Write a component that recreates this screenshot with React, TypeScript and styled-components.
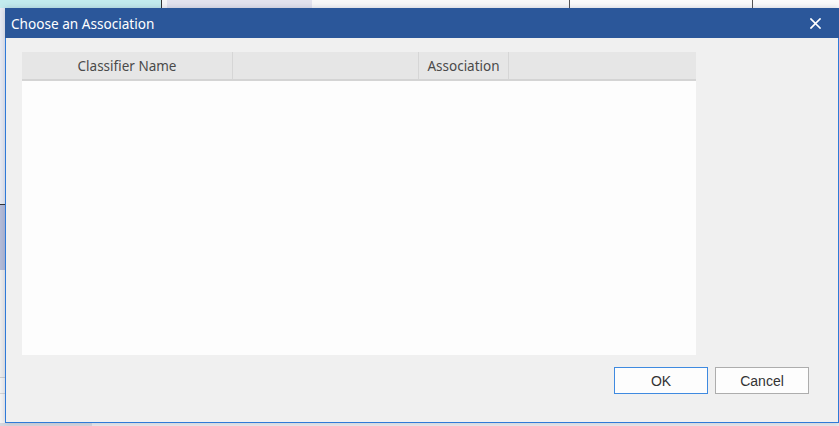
import React from 'react';
import styled, { createGlobalStyle } from 'styled-components';

const GlobalStyle = createGlobalStyle`
  html, body
  {
    margin: 0;
    padding: 0;
    background: #f4f4f6;
    overflow: hidden;
  }
`;

// window behind the modal: only its edges show around the dialog
const Desktop = styled.div`
  position: relative;
  width: 839px;
  height: 426px;
  display: flex;
  flex-direction: column;
  background: #f4f4f6;
`;

const TopStrip = styled.div`
  display: flex;
  height: 8px;
  flex-shrink: 0;
`;

const Pane = styled.div<{ $w?: number; $bg: string; $edge?: string }>`
  ${p => (p.$w ? `width: ${p.$w}px;` : 'flex: 1;')}
  background: ${p => p.$bg};
  border-right: ${p => (p.$edge ? `1px solid ${p.$edge}` : 'none')};
  flex-shrink: 0;
`;

const Middle = styled.div`
  flex: 1;
  display: flex;
`;

const LeftRail = styled.div`
  width: 5px;
  display: flex;
  flex-direction: column;
`;

const RailPart = styled.div<{ $h?: number; $bg: string; $line?: string }>`
  ${p => (p.$h ? `height: ${p.$h}px;` : 'flex: 1;')}
  background: ${p => p.$bg};
  border-top: ${p => (p.$line ? `1px solid ${p.$line}` : 'none')};
  flex-shrink: 0;
`;

const BottomShade = styled.div`
  height: 3px;
  display: flex;
`;

const Dialog = styled.div`
  position: absolute;
  left: 5px;
  top: 8px;
  width: 834px;
  height: 415px;
  box-sizing: border-box;
  border: 1px solid #2f7ad8;
  border-top: none;
  background: #f0f0f0;
  display: flex;
  flex-direction: column;
  box-shadow: 0 0 6px rgba(60, 70, 110, 0.25);
`;

const TitleBar = styled.div`
  height: 30px;
  margin: 0 -1px;
  background: #2b579a;
  display: flex;
  align-items: center;
  justify-content: space-between;
  padding: 0 12px 0 6px;
  flex-shrink: 0;
`;

const Title = styled.span`
  color: #ffffff;
  font-family: "Noto Sans", "Open Sans", sans-serif;
  font-size: 13.6px;
  padding-top: 1px;
`;

const CloseButton = styled.button`
  width: 24px;
  height: 24px;
  border: none;
  background: transparent;
  padding: 0;
  display: flex;
  align-items: center;
  justify-content: center;
  cursor: pointer;
`;

const Body = styled.div`
  flex: 1;
  padding: 14px 0 0 16px;
  display: flex;
  flex-direction: column;
`;

const Grid = styled.div`
  width: 674px;
  height: 303px;
  background: #fdfdfd;
  display: flex;
  flex-direction: column;
`;

const HeaderRow = styled.div`
  height: 27px;
  display: flex;
  background: #e6e6e6;
  border-bottom: 2px solid #d4d4d4;
`;

const HeaderCell = styled.div<{ $w?: number }>`
  ${p => (p.$w ? `width: ${p.$w}px;` : 'flex: 1;')}
  box-sizing: border-box;
  border-right: ${p => (p.$w ? '1px solid #d6d6d6' : 'none')};
  display: flex;
  align-items: center;
  justify-content: center;
  padding-top: 1px;
  font-family: "Noto Sans", "Open Sans", sans-serif;
  font-size: 13.5px;
  color: #4a4a4a;
`;

const Rows = styled.div`
  flex: 1;
`;

const Footer = styled.div`
  display: flex;
  justify-content: flex-end;
  gap: 7px;
  padding: 12px 29px 28px 0;
`;

const Button = styled.button<{ $default?: boolean }>`
  width: 94px;
  height: 27px;
  box-sizing: border-box;
  background: #fdfdfd;
  border: 1px solid ${p => (p.$default ? '#3f8ae0' : '#adadad')};
  font-family: "Liberation Sans", Arial, sans-serif;
  font-size: 14px;
  color: #333333;
  padding: 0;
`;

const columns = [
  { label: 'Classifier Name', width: 211 },
  { label: '', width: 186 },
  { label: 'Association', width: 90 },
];

const App: React.FC = () =>
{
  return (
    <>
      <GlobalStyle />
      <Desktop>
        <TopStrip>
          <Pane $w={161} $bg="#c3ecee" $edge="#333333" />
          <Pane $w={5} $bg="#f6f6f8" />
          <Pane $w={145} $bg="#e3e3ee" />
          <Pane $w={257} $bg="#f8f8f8" $edge="#555555" />
          <Pane $w={182} $bg="#fbfbfb" $edge="#555555" />
          <Pane $bg="#fbfbfb" />
        </TopStrip>
        <Middle>
          <LeftRail>
            <RailPart $h={196} $bg="#e8ebf3" />
            <RailPart $h={65} $bg="#b4bcd9" $line="#333333" />
            <RailPart $h={107} $bg="#eeeeee" />
            <RailPart $h={15} $bg="#f3f3f3" $line="#cfcfcf" />
            <RailPart $bg="#f5f5f5" $line="#d6d6d6" />
          </LeftRail>
        </Middle>
        <BottomShade>
          <Pane $w={92} $bg="#d7d9e0" />
          <Pane $bg="#ececee" />
        </BottomShade>

        <Dialog>
          <TitleBar>
            <Title>Choose an Association</Title>
            <CloseButton aria-label="Close">
              <svg width="11" height="11" viewBox="0 0 11 11">
                <path d="M1 1L10 10M10 1L1 10" stroke="#ffffff" strokeWidth="1.7" strokeLinecap="square" />
              </svg>
            </CloseButton>
          </TitleBar>
          <Body>
            <Grid>
              <HeaderRow>
                {columns.map((c, i) => (
                  <HeaderCell key={i} $w={c.width}>{c.label}</HeaderCell>
                ))}
                <HeaderCell />
              </HeaderRow>
              <Rows />
            </Grid>
          </Body>
          <Footer>
            <Button $default>OK</Button>
            <Button>Cancel</Button>
          </Footer>
        </Dialog>
      </Desktop>
    </>
  );
}

export default App;
